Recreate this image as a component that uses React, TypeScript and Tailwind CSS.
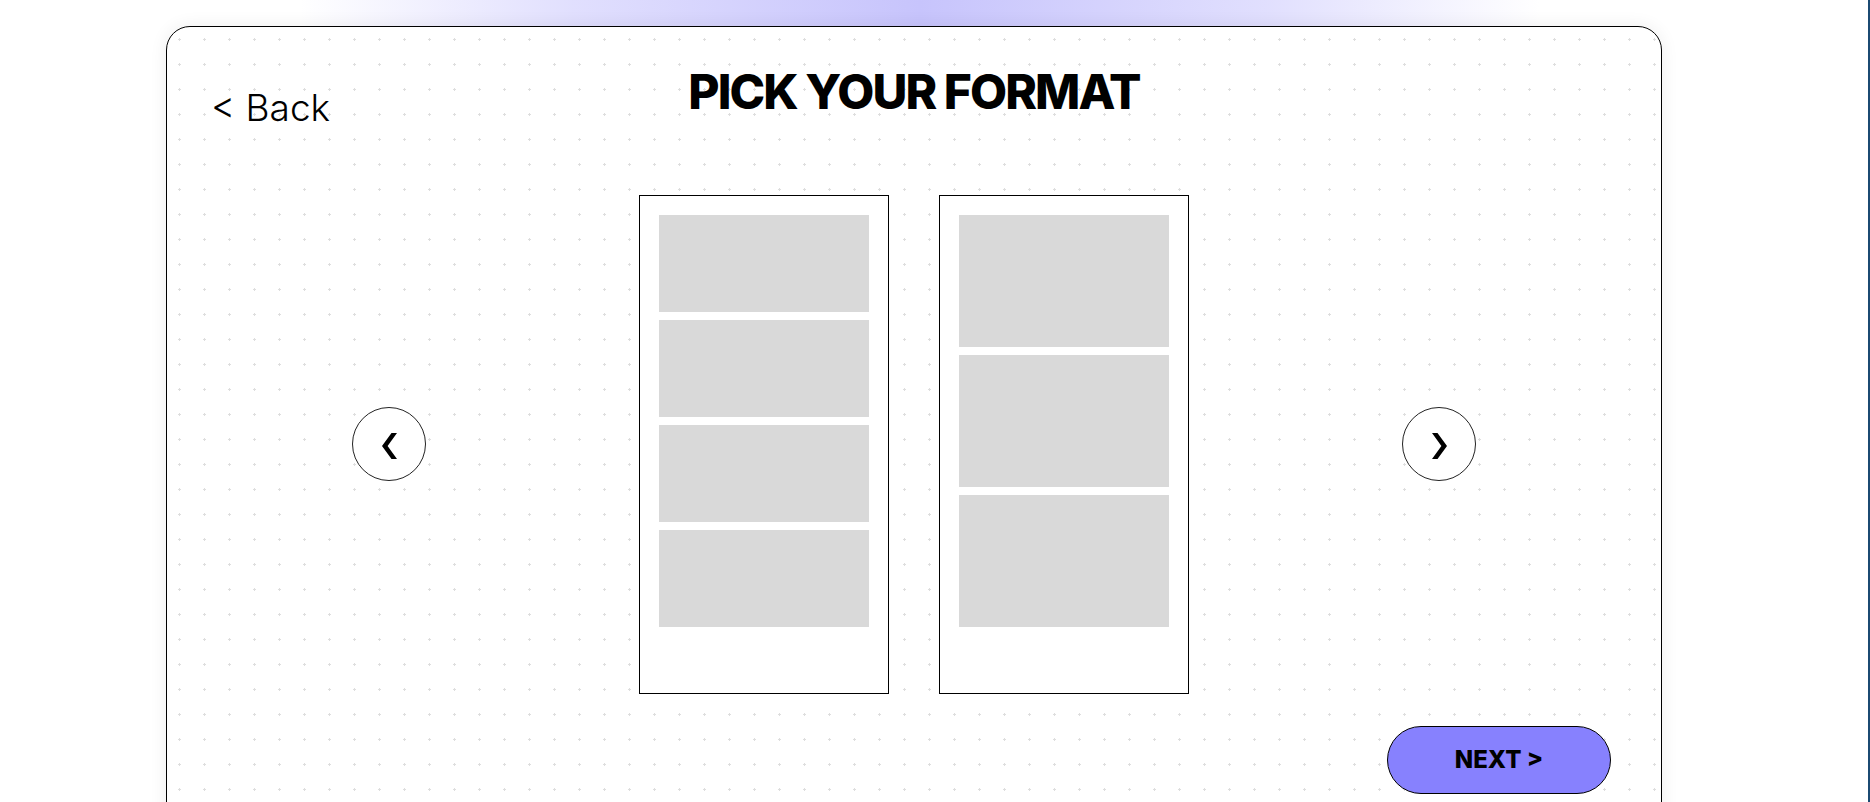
import React from "react";

const slotsA = [0, 1, 2, 3];
const slotsB = [0, 1, 2];

const Chevron: React.FC<{ dir: "left" | "right" }> = ({ dir }) => (
  <svg
    width="15"
    height="26"
    viewBox="0 0 15 26"
    className={`mt-1 ${dir === "right" ? "-scale-x-100" : ""}`}
  >
    <polygon points="9.5,0 15,0 5.6,13 15,26 9.5,26 0,13" fill="#000" />
  </svg>
);

const DotGrid = () => (
  <svg className="absolute inset-0 h-full w-full pointer-events-none">
    <defs>
      <pattern id="plus" width="25" height="25" patternUnits="userSpaceOnUse">
        <rect x="11" y="12" width="3" height="1" fill="#dedede" />
        <rect x="12" y="11" width="1" height="3" fill="#dedede" />
      </pattern>
    </defs>
    <rect width="100%" height="100%" fill="url(#plus)" />
  </svg>
);

const Strip: React.FC<{ slots: number[]; h: string }> = ({ slots, h }) => (
  <div className="w-[250px] h-[499px] border border-black bg-white p-[19px] flex flex-col gap-2">
    {slots.map((s) => (
      <div key={s} className={`w-full ${h} bg-[#d9d9d9]`} />
    ))}
  </div>
);

export default function App() {
  return (
    <div
      className="relative h-[802px] w-full overflow-hidden bg-white border-r-2 border-[#1b4a72]"
      style={{ fontFamily: "Inter, 'Noto Sans', sans-serif" }}
    >
      <div className="absolute top-0 left-[300px] w-[1240px] h-[90px] bg-[linear-gradient(to_right,rgba(200,197,253,0)_0%,rgba(200,197,253,0.55)_22%,#c7c4fc_50%,rgba(200,197,253,0.55)_78%,rgba(200,197,253,0)_100%)]" />

      <div className="relative pl-[166px] pt-[26px]">
        <div className="relative w-[1496px] h-[820px] rounded-3xl border border-black bg-white shadow-[0_0_18px_rgba(0,0,0,0.07)] overflow-hidden">
          <DotGrid />

          <div className="relative pt-[41px]">
            <div className="grid h-[48px] grid-cols-[1fr_auto_1fr] items-start">
              <button className="justify-self-start ml-[44px] mt-[21px] text-[37px] leading-none font-light text-black">
                &lt; Back
              </button>
              <h1 className="text-[48px] leading-none font-extrabold tracking-[-0.04em] text-black">
                PICK YOUR FORMAT
              </h1>
              <div />
            </div>

            <div className="mt-[79px] flex justify-center items-start">
              <button className="mt-[212px] w-[74px] h-[74px] rounded-full border border-[#222] bg-white flex items-center justify-center">
                <Chevron dir="left" />
              </button>
              <div className="ml-[213px] flex gap-[50px]">
                <Strip slots={slotsA} h="h-[97px]" />
                <Strip slots={slotsB} h="h-[132px]" />
              </div>
              <button className="ml-[213px] mt-[212px] w-[74px] h-[74px] rounded-full border border-[#222] bg-white flex items-center justify-center">
                <Chevron dir="right" />
              </button>
            </div>

            <div className="mt-[32px] flex justify-end pr-[50px]">
              <button className="w-[224px] h-[68px] rounded-full border border-black bg-[#8781fe] text-[24px] leading-none font-extrabold text-black">
                NEXT &gt;
              </button>
            </div>
          </div>
        </div>
      </div>
    </div>
  );
}
